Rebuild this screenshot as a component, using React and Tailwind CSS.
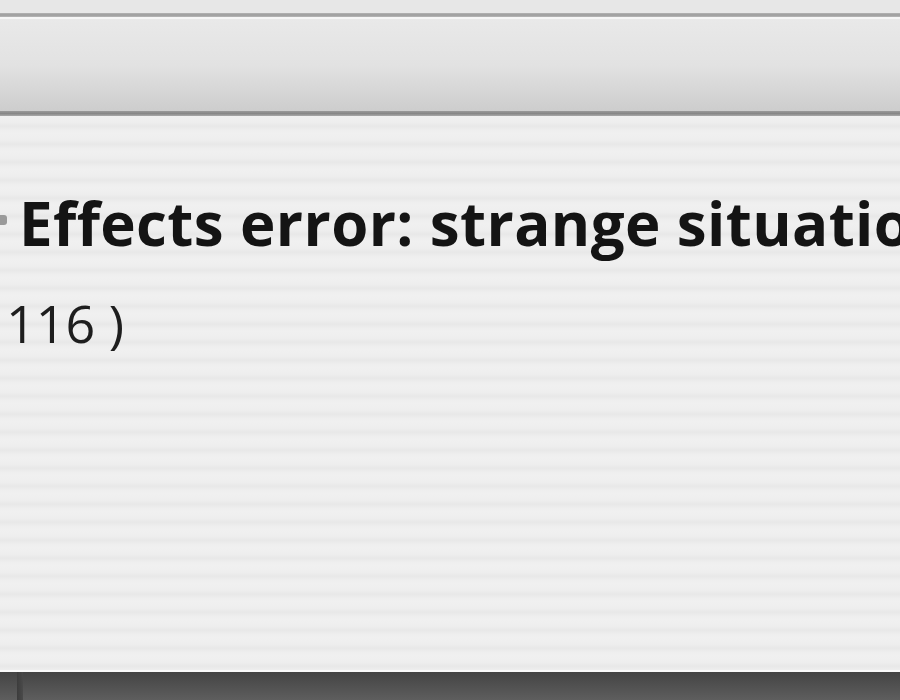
export default function App() {
  return (
    <div className="flex h-[700px] w-[900px] flex-col overflow-hidden bg-[#e8e8e8] font-['Open_Sans',sans-serif]">
      {/* title strip above toolbar */}
      <div className="h-[13px] bg-[#e7e7e7]" />
      <div className="h-[4px] bg-gradient-to-b from-[#b4b4b4] via-[#9c9c9c] to-[#b8b8b8]" />
      {/* toolbar */}
      <div className="h-[94px] border-t-2 border-[#f6f6f6] bg-gradient-to-b from-[#e9e9e9] via-[#e2e2e2] to-[#cdcdcd]" />
      <div className="h-[5px] bg-gradient-to-b from-[#9a9a9a] via-[#878787] to-[#a9a9a9]" />

      {/* pinstripe body */}
      <div className="flex flex-1 flex-col border-b-2 border-[#fafafa] bg-[repeating-linear-gradient(180deg,#f0f0f0_0px,#eeeeee_6px,#e8e8e8_10px,#eeeeee_14px,#f0f0f0_18px)]">
        <div className="mt-[77px] flex items-center whitespace-nowrap">
          <div className="mt-[-6px] h-[10px] w-[7px] shrink-0 rounded-r-[3px] bg-[#9a9a9a]" />
          <span className="ml-[12px] text-[60px] font-bold leading-none tracking-[0.4px] text-[#141414]">
            Effects error: strange situation
          </span>
        </div>
        <div className="ml-[6px] mt-[44px] whitespace-nowrap text-[52px] leading-none text-[#1e1e1e]">
          116 )
        </div>
      </div>

      {/* dark bottom bar */}
      <div className="flex h-[28px] bg-gradient-to-b from-[#444444] to-[#5e5e5e]">
        <div className="ml-[17px] w-[6px] bg-gradient-to-r from-[#3c3c3c] to-[#4a4a4a]" />
      </div>
    </div>
  );
}
